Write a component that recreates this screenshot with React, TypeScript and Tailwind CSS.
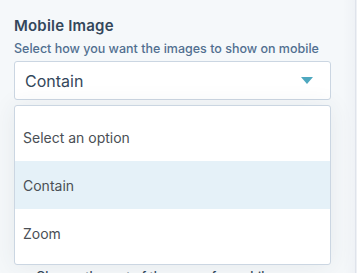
const options = ['Select an option', 'Contain', 'Zoom'];

export default function App() {
  const selected = 'Contain';
  return (
    <div
      className="relative h-[273px] w-[357px] overflow-hidden bg-[#f5f8fa] text-[#33475b]"
      style={{ fontFamily: 'Inter, "Noto Sans", sans-serif' }}
    >
      {/* right panel edge */}
      <div className="absolute right-0 top-0 h-full w-[14px] bg-gradient-to-r from-[#f5f8fa] to-[#eef1f5]" />
      <div className="absolute right-[1px] top-0 h-full w-px bg-[#dfe3eb]" />

      <div className="px-[14px] pt-[17px]">
        <h3 className="text-[15px] font-semibold leading-[18px] tracking-[0.2px]">Mobile Image</h3>
        <p className="mt-[6px] text-[12.5px] font-medium leading-[15px] text-[#516f90]">
          Select how you want the images to show on mobile
        </p>

        <div className="relative mt-[5px] w-[317px]">
          <button className="flex h-[39px] w-full items-center justify-between rounded-[3px] border border-[#cbd6e2] bg-white pl-[10px] pr-[17px] text-left text-[16px]">
            <span>{selected}</span>
            <svg width="12" height="7" viewBox="0 0 12 7">
              <path d="M0 0h12L6 7z" fill="#4ea8bf" />
            </svg>
          </button>

          <p className="mt-[168px] pl-[22px] text-[12.5px] font-medium">
            Choose the rest of the space for mobile
          </p>

          {/* open dropdown menu */}
          <ul className="absolute left-0 top-[44px] w-full rounded-[3px] border border-[#cbd6e2] bg-white py-[7px] shadow-[0_1px_24px_0_rgba(45,62,80,0.08)]">
            {options.map(o => (
              <li
                key={o}
                className={
                  'flex h-[48px] items-center pl-[8px] text-[14px] text-[#4a4f55] ' +
                  (o === selected ? 'bg-[#e5f1f8]' : '')
                }
              >
                {o}
              </li>
            ))}
          </ul>
        </div>
      </div>
    </div>
  );
}
